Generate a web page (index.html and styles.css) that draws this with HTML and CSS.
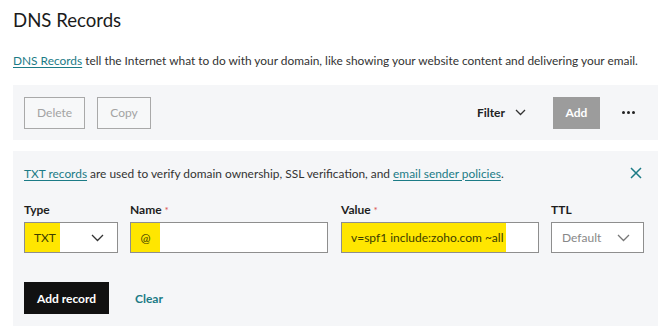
FILE: index.html
```html
<!DOCTYPE html>
<html>
<head>
<meta charset="utf-8">
<link rel="stylesheet" href="styles.css">
</head>
<body>
<div class="page">
  <h1 class="title">DNS Records</h1>
  <p class="intro"><a class="link" href="#">DNS Records</a> tell the Internet what to do with your domain, like showing your website content and delivering your email.</p>

  <div class="toolbar">
    <div class="tb-left">
      <button class="btn-ghost">Delete</button>
      <button class="btn-ghost">Copy</button>
    </div>
    <div class="tb-right">
      <span class="filter">Filter
        <svg width="11" height="7" viewBox="0 0 11 7"><path d="M1 1l4.5 4.5L10 1" fill="none" stroke="#333" stroke-width="1.3"/></svg>
      </span>
      <button class="btn-add">Add</button>
      <span class="dots"><i></i><i></i><i></i></span>
    </div>
  </div>

  <div class="form">
    <div class="info">
      <p><a class="link" href="#">TXT records</a> are used to verify domain ownership, SSL verification, and <a class="link" href="#">email sender policies</a>.</p>
      <svg class="close" width="12" height="12" viewBox="0 0 12 12"><path d="M1 1l10 10M11 1L1 11" stroke="#1b7b86" stroke-width="1.5" fill="none"/></svg>
    </div>
    <div class="fields">
      <div class="field">
        <label>Type</label>
        <div class="box select"><span class="hl">TXT</span>
          <svg width="13" height="8" viewBox="0 0 13 8"><path d="M1 1l5.5 5.5L12 1" fill="none" stroke="#333" stroke-width="1.3"/></svg>
        </div>
      </div>
      <div class="field">
        <label>Name <span class="req">*</span></label>
        <div class="box"><span class="hl hl-at">@</span></div>
      </div>
      <div class="field">
        <label>Value <span class="req">*</span></label>
        <div class="box"><span class="hl hl-val">v=spf1 include:zoho.com ~all</span></div>
      </div>
      <div class="field">
        <label>TTL</label>
        <div class="box select"><span class="muted">Default</span>
          <svg width="13" height="8" viewBox="0 0 13 8"><path d="M1 1l5.5 5.5L12 1" fill="none" stroke="#777" stroke-width="1.3"/></svg>
        </div>
      </div>
    </div>
    <div class="actions">
      <button class="btn-dark">Add record</button>
      <a class="clear" href="#">Clear</a>
    </div>
  </div>
</div>
</body>
</html>
```

FILE: styles.css
```css
* { box-sizing: border-box; }
body {
  margin: 0;
  background: #fff;
  font-family: Lato, "Liberation Sans", sans-serif;
  color: #2b2b2b;
}
.page {
  padding: 7px 12px 0 13px;
  width: 658px;
  box-sizing: content-box;
}
.title {
  margin: 0;
  font-weight: 400;
  font-size: 18.6px;
  line-height: 26px;
  color: #1b1b1b;
}
.intro {
  margin: 19px 0 0 0;
  font-size: 11.9px;
  line-height: 18px;
  color: #333;
  white-space: nowrap;
}
.link {
  color: #1b7b86;
  text-decoration: underline;
  text-underline-offset: 2px;
}
.toolbar {
  margin-top: 15px;
  width: 645px;
  height: 55px;
  background: #f5f6f8;
  padding: 0 11px;
  display: flex;
  align-items: center;
  justify-content: space-between;
}
.tb-left { display: flex; gap: 12px; }
button { font-family: inherit; cursor: pointer; }
.btn-ghost {
  height: 32px;
  padding: 0 12px;
  background: #f7f8f9;
  border: 1px solid #a9a9a9;
  color: #a3a3a3;
  font-size: 12px;
}
.btn-ghost:first-child { width: 61px; }
.btn-ghost + .btn-ghost { width: 54px; }
.tb-right { display: flex; align-items: center; }
.filter {
  display: flex;
  align-items: center;
  gap: 10px;
  font-size: 12px;
  font-weight: 700;
  color: #222;
  margin-right: 27px;
}
.btn-add {
  width: 47px;
  height: 32px;
  border: 0;
  background: #9c9c9c;
  color: #fff;
  font-weight: 700;
  font-size: 12px;
  margin-right: 22px;
}
.dots { display: flex; gap: 2px; margin-right: 12px; }
.dots i { width: 3px; height: 3px; border-radius: 50%; background: #222; display: block; }
.form {
  margin-top: 11px;
  width: 645px;
  background: #f5f6f8;
  padding: 11px 13px 12px 11px;
}
.info {
  display: flex;
  justify-content: space-between;
  align-items: center;
  height: 22px;
}
.info p {
  margin: 0;
  font-size: 11.9px;
  color: #333;
}
.close { margin-right: 3px; }
.fields {
  margin-top: 18px;
  display: grid;
  grid-template-columns: 94px 198px 199px 93px;
  column-gap: 12px;
}
.fields .field:nth-child(3) { margin-left: 1px; }
label {
  display: block;
  font-size: 12px;
  font-weight: 700;
  color: #1e1e1e;
  line-height: 16px;
  margin-bottom: 4px;
}
.req { color: #d9534f; font-weight: 400; font-size: 10px; vertical-align: top; }
.box {
  height: 31px;
  background: #fff;
  border: 1px solid #8e8e8e;
  display: flex;
  align-items: stretch;
  font-size: 12px;
}
.select { justify-content: space-between; align-items: center; padding-right: 13px; }
.select .hl { align-self: stretch; }
.hl {
  background: #ffe600;
  display: flex;
  align-items: center;
  padding: 0 10px;
  color: #3c3c00;
}
.select .hl { width: 35px; padding-left: 9px; }
.hl-at { width: 29px; justify-content: center; padding: 0; }
.hl-val { width: 164px; padding-left: 9px; white-space: nowrap; }
.muted { color: #888; padding-left: 10px; }
.actions {
  margin-top: 29px;
  display: flex;
  align-items: center;
  gap: 26px;
}
.btn-dark {
  height: 32px;
  width: 85px;
  border: 0;
  background: #111;
  color: #fff;
  font-weight: 700;
  font-size: 12px;
}
.clear {
  color: #1b7b86;
  font-weight: 700;
  font-size: 12px;
  text-decoration: none;
}
```
